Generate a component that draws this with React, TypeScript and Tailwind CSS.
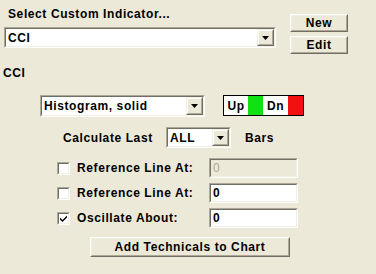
import React from "react";

const Arrow = () => (
  <svg width="7" height="4" viewBox="0 0 7 4">
    <path d="M0 0H7L3.5 4Z" fill="#000" />
  </svg>
);

const DropBtn = () => (
  <div className="w-[17px] h-full border border-t-[#f1efe2] border-l-[#f1efe2] border-b-[#716f64] border-r-[#716f64]">
    <div className="w-full h-full border border-t-white border-l-white border-b-[#aca899] border-r-[#aca899] bg-[#ece9d8] flex items-center justify-center">
      <Arrow />
    </div>
  </div>
);

const Sunken = ({ className, inner, children }: { className: string; inner?: string; children?: React.ReactNode }) => (
  <div className={"border border-t-[#aca899] border-l-[#aca899] border-b-white border-r-white " + className}>
    <div className={"w-full h-full border border-t-[#716f64] border-l-[#716f64] border-b-[#f1efe2] border-r-[#f1efe2] " + (inner ?? "bg-white")}>
      {children}
    </div>
  </div>
);

const Combo = ({ className, text }: { className: string; text: string }) => (
  <Sunken className={className}>
    <div className="flex h-full">
      <div className="flex-1 flex items-center pl-[2px] leading-[14px]">{text}</div>
      <DropBtn />
    </div>
  </Sunken>
);

const Raised = ({ className, children }: { className: string; children: React.ReactNode }) => (
  <div className={"border border-t-white border-l-white border-b-[#716f64] border-r-[#716f64] " + className}>
    <div className="w-full h-full border border-t-[#f1efe2] border-l-[#f1efe2] border-b-[#aca899] border-r-[#aca899] bg-[#ece9d8] flex items-center justify-center leading-[14px]">
      {children}
    </div>
  </div>
);

const Check = ({ checked }: { checked?: boolean }) => (
  <Sunken className="w-[13px] h-[13px]">
    {checked && (
      <svg width="9" height="9" viewBox="0 0 9 9" className="block">
        <path d="M1 3.5L3.5 6L8 1.5V3.5L3.5 8L1 5.5Z" fill="#000" />
      </svg>
    )}
  </Sunken>
);

const CheckRow = ({ label, checked, value, disabled }: { label: string; checked?: boolean; value: string; disabled?: boolean }) => (
  <div className="flex items-center h-[20px]">
    <div className="ml-[57px]"><Check checked={checked} /></div>
    <div className="ml-[7px] w-[132px] leading-[14px]">{label}</div>
    <Sunken className="w-[89px] h-[20px]" inner={disabled ? "bg-[#ece9d8]" : "bg-white"}>
      <div className={"h-full flex items-center pl-[2px] leading-[14px] " + (disabled ? "text-[#aca899] font-normal" : "")}>{value}</div>
    </Sunken>
  </div>
);

export default function App() {
  return (
    <div className="w-[376px] h-[274px] bg-[#ece9d8] text-black text-[12px] font-bold tracking-[0.6px] overflow-hidden" style={{ fontFamily: '"Liberation Sans", Arial, sans-serif' }}>
      <div className="flex h-[48px]">
        <div>
          <div className="pl-[8px] pt-[7px] h-[21px] leading-[14px]">Select Custom Indicator...</div>
          <Combo className="ml-[4px] mt-[6px] w-[272px] h-[21px]" text="CCI" />
        </div>
        <div className="ml-[14px] pt-[14px] flex flex-col gap-[4px]">
          <Raised className="w-[58px] h-[18px]">New</Raised>
          <Raised className="w-[58px] h-[18px]">Edit</Raised>
        </div>
      </div>
      <div className="pl-[3px] mt-[18px] h-[14px] leading-[14px]">CCI</div>
      <div className="flex items-start mt-[15px]">
        <Combo className="ml-[40px] w-[165px] h-[22px]" text="Histogram, solid" />
        <div className="ml-[18px] w-[81px] h-[21px] border border-[#000] flex leading-[14px]">
          <div className="w-[24px] bg-white flex items-center justify-center">Up</div>
          <div className="w-[15px] bg-[#11e011]" />
          <div className="w-[25px] bg-white flex items-center justify-center">Dn</div>
          <div className="flex-1 bg-[#f21010]" />
        </div>
      </div>
      <div className="flex items-center mt-[10px] h-[21px]">
        <div className="ml-[63px] w-[103px] leading-[14px]">Calculate Last</div>
        <Combo className="w-[65px] h-[21px]" text="ALL" />
        <div className="ml-[14px] leading-[14px]">Bars</div>
      </div>
      <div className="mt-[10px] flex flex-col gap-[5px]">
        <CheckRow label="Reference Line At:" value="0" disabled />
        <CheckRow label="Reference Line At:" value="0" />
        <CheckRow label="Oscillate About:" value="0" checked />
      </div>
      <div className="flex mt-[9px]">
        <Raised className="ml-[90px] w-[200px] h-[20px]">Add Technicals to Chart</Raised>
      </div>
    </div>
  );
}
